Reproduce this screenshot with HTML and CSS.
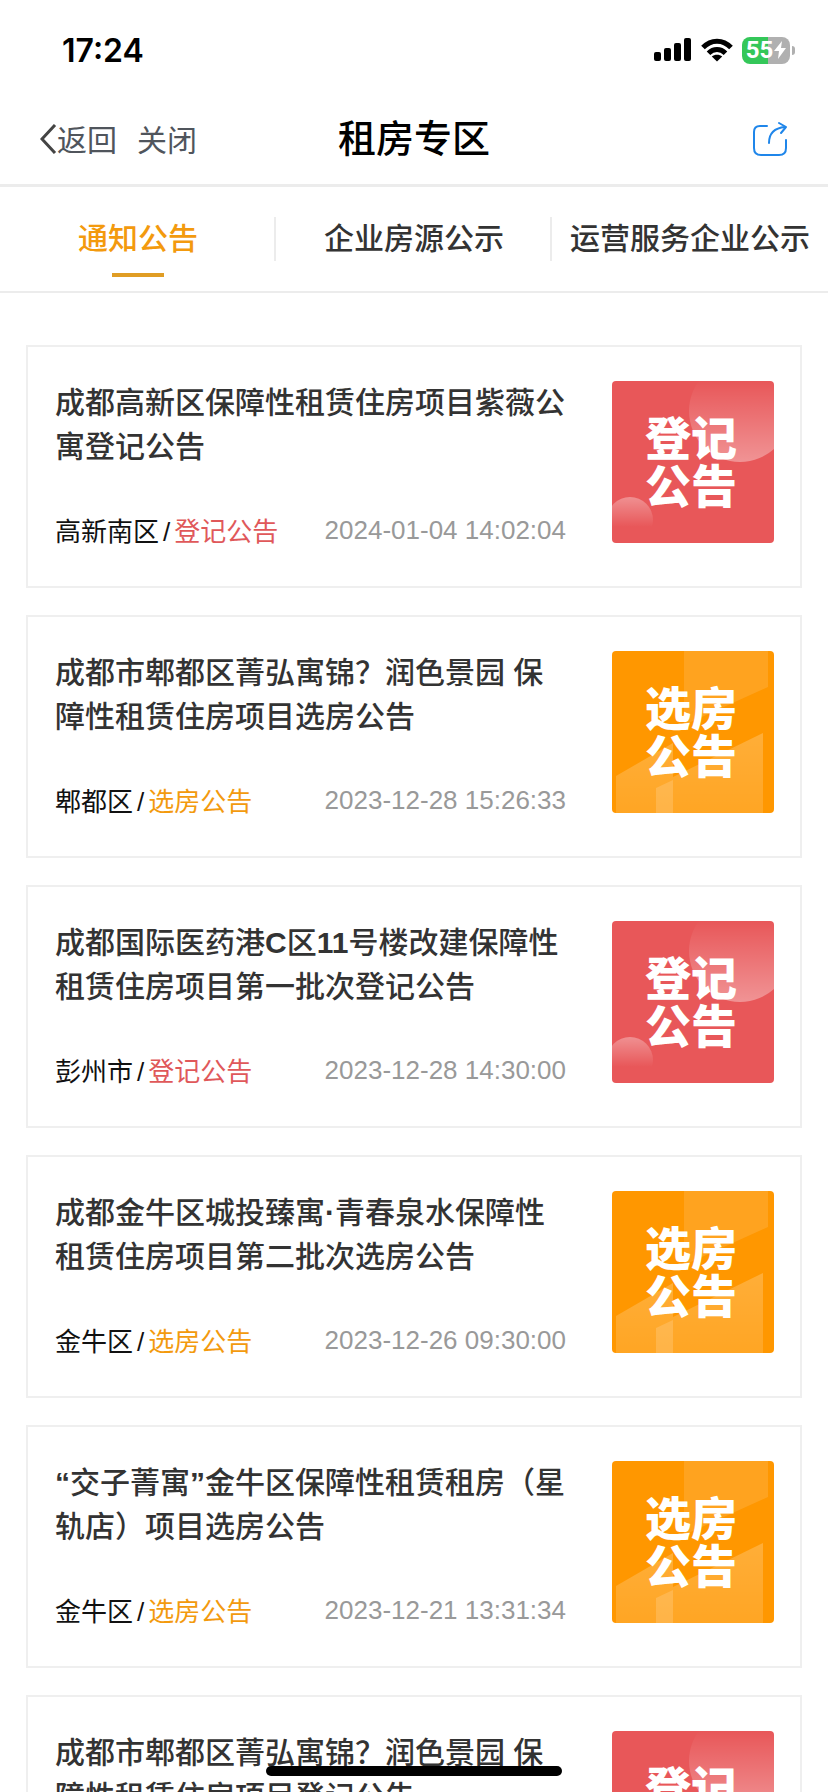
FILE: index.html
```html
<!DOCTYPE html>
<html lang="zh-CN">
<head>
  <meta charset="UTF-8">
  <meta name="viewport" content="width=device-width, initial-scale=1.0">
  <title>租房专区</title>
  <link rel="stylesheet" href="styles.css">
</head>
<body>
  <!-- shared badge artwork -->
  <svg class="defs" width="0" height="0" aria-hidden="true">
    <defs>
      <linearGradient id="fadeDown" x1="0" y1="0" x2="0" y2="1">
        <stop offset="0" stop-color="#fff" stop-opacity="0"/>
        <stop offset="0.2" stop-color="#fff" stop-opacity="0"/>
        <stop offset="1" stop-color="#fff" stop-opacity="0.36"/>
      </linearGradient>
      <linearGradient id="fadeUp" x1="0" y1="0" x2="0" y2="1">
        <stop offset="0" stop-color="#fff" stop-opacity="0.34"/>
        <stop offset="0.65" stop-color="#fff" stop-opacity="0"/>
      </linearGradient>
      <linearGradient id="shade" x1="0" y1="0" x2="0" y2="1">
        <stop offset="0" stop-color="#fff" stop-opacity="0.22"/>
        <stop offset="1" stop-color="#fff" stop-opacity="0.14"/>
      </linearGradient>
    </defs>
    <symbol id="art-register" viewBox="0 0 162 162">
      <rect width="162" height="162" fill="#e85759"/>
      <circle cx="128" cy="30" r="51" fill="url(#fadeDown)"/>
      <circle cx="18" cy="139" r="23" fill="url(#fadeUp)"/>
    </symbol>
    <symbol id="art-select" viewBox="0 0 162 162">
      <rect width="162" height="162" fill="#ff9700"/>
      <path d="M72 0H156V36L72 74Z" fill="#fff" opacity="0.12"/>
      <path d="M4 125L61 92V162H4Z" fill="url(#shade)"/>
      <path d="M61 126L151 82V162H61Z" fill="url(#shade)"/>
      <path d="M44 137L61 129V162H44Z" fill="#fff" opacity="0.16"/>
    </symbol>
  </svg>

  <header>
    <div class="status-bar">
      <span class="time">17:24</span>
      <div class="status-icons">
        <svg width="38" height="24" viewBox="0 0 38 24">
          <rect x="0" y="14" width="7" height="9" rx="2"/>
          <rect x="10" y="10" width="7" height="13" rx="2"/>
          <rect x="20" y="5" width="7" height="18" rx="2"/>
          <rect x="30" y="0" width="7" height="23" rx="2"/>
        </svg>
        <svg width="32" height="24" viewBox="0 0 32 24">
          <g fill="none" stroke="#000" stroke-width="5">
            <path d="M2 9.5C10 1 22 1 30 9.5"/>
            <path d="M7.5 15.2C12.5 10.2 19.500 10.2 24.500 15.2"/>
          </g>
          <path d="M16 23.500L10.800 18.500C13.500 16.200 18.500 16.200 21.200 18.500Z"/>
        </svg>
        <div class="battery">
          <span>55</span>
          <svg width="12" height="18" viewBox="0 0 12 18"><path d="M8 0L0 10H5L4 18L12 7H7Z" fill="#fff"/></svg>
        </div>
      </div>
    </div>
    <div class="nav">
      <div class="nav-left">
        <button type="button" class="nav-btn">
          <svg width="17" height="30" viewBox="0 0 17 30"><path d="M15 1L2 15L15 29" fill="none" stroke="#444" stroke-width="3"/></svg>
          <span>返回</span>
        </button>
        <button type="button" class="nav-btn"><span>关闭</span></button>
      </div>
      <h1>租房专区</h1>
      <button type="button" class="share" aria-label="分享">
        <svg width="36" height="36" viewBox="0 0 36 36" fill="none" stroke="#1f86ea" stroke-width="2" stroke-linecap="round" stroke-linejoin="round">
          <path d="M15 5H8Q2 5 2 11V27Q2 34 9 34H27Q34 34 34 27V19"/>
          <path d="M17 22C17 13 22 7 33 6"/>
          <path d="M27 2L34 6L29 12"/>
        </svg>
      </button>
    </div>
  </header>

  <nav class="tabs">
    <a href="#" class="active">通知公告</a>
    <a href="#">企业房源公示</a>
    <a href="#">运营服务企业公示</a>
  </nav>

  <main class="list">
    <article class="card register">
      <div class="card-body">
        <h2>成都高新区保障性租赁住房项目紫薇公寓登记公告</h2>
        <div class="meta"><span>高新南区<i>/</i><em>登记公告</em></span><time>2024-01-04 14:02:04</time></div>
      </div>
      <div class="badge"><svg><use href="#art-register"/></svg><p>登记<br>公告</p></div>
    </article>

    <article class="card select">
      <div class="card-body">
        <h2>成都市郫都区菁弘寓锦？润色景园 保障性租赁住房项目选房公告</h2>
        <div class="meta"><span>郫都区<i>/</i><em>选房公告</em></span><time>2023-12-28 15:26:33</time></div>
      </div>
      <div class="badge"><svg><use href="#art-select"/></svg><p>选房<br>公告</p></div>
    </article>

    <article class="card register">
      <div class="card-body">
        <h2>成都国际医药港<b>C</b>区<b>11</b>号楼改建保障性租赁住房项目第一批次登记公告</h2>
        <div class="meta"><span>彭州市<i>/</i><em>登记公告</em></span><time>2023-12-28 14:30:00</time></div>
      </div>
      <div class="badge"><svg><use href="#art-register"/></svg><p>登记<br>公告</p></div>
    </article>

    <article class="card select">
      <div class="card-body">
        <h2>成都金牛区城投臻寓<b>·</b>青春泉水保障性租赁住房项目第二批次选房公告</h2>
        <div class="meta"><span>金牛区<i>/</i><em>选房公告</em></span><time>2023-12-26 09:30:00</time></div>
      </div>
      <div class="badge"><svg><use href="#art-select"/></svg><p>选房<br>公告</p></div>
    </article>

    <article class="card select">
      <div class="card-body">
        <h2><b>“</b>交子菁寓<b>”</b>金牛区保障性租赁租房（星轨店）项目选房公告</h2>
        <div class="meta"><span>金牛区<i>/</i><em>选房公告</em></span><time>2023-12-21 13:31:34</time></div>
      </div>
      <div class="badge"><svg><use href="#art-select"/></svg><p>选房<br>公告</p></div>
    </article>

    <article class="card register">
      <div class="card-body">
        <h2>成都市郫都区菁弘寓锦？润色景园 保障性租赁住房项目登记公告</h2>
      </div>
      <div class="badge"><svg><use href="#art-register"/></svg><p>登记<br>公告</p></div>
    </article>
  </main>

  <div class="home-indicator"></div>
</body>
</html>
```
FILE: styles.css
```css
* {
  box-sizing: border-box;
}
body {
  display: flex;
  flex-direction: column;
  height: 100vh;
  margin: 0;
  overflow: hidden;
  background: #fff;
  color: #333;
  font-family: "Liberation Sans", "Noto Sans CJK SC", sans-serif;
}
h1, h2, p {
  margin: 0;
}
button {
  padding: 0;
  border: none;
  background: none;
  font: inherit;
  cursor: pointer;
}
svg {
  display: block;
}
.defs {
  position: absolute;
}

/* status bar */
.status-bar {
  display: flex;
  align-items: center;
  justify-content: space-between;
  height: 92px;
  padding: 8px 33px 0 62px;
  color: #000;
}
.time {
  font-family: Inter, sans-serif;
  font-size: 32px;
  font-weight: 600;
}
.status-icons {
  display: flex;
  align-items: center;
  gap: 9px;
}
.battery {
  position: relative;
  display: flex;
  align-items: center;
  justify-content: center;
  gap: 1px;
  width: 48px;
  height: 27px;
  margin-right: 5px;
  border-radius: 8px;
  background: linear-gradient(90deg, #34c759 55%, #b0b0b0 55%);
  color: #fff;
  font-family: Roboto, sans-serif;
  font-size: 24px;
  font-weight: 700;
  line-height: 27px;
}
.battery::after {
  content: "";
  position: absolute;
  right: -5px;
  top: 9px;
  width: 3px;
  height: 9px;
  border-radius: 0 4px 4px 0;
  background: #b0b0b0;
}

/* nav bar */
.nav {
  display: grid;
  grid-template-columns: 1fr auto 1fr;
  align-items: center;
  height: 95px;
  padding: 2px 40px 0 40px;
  border-bottom: 3px solid #ececec;
}
.nav-left {
  display: flex;
  gap: 20px;
}
.nav-btn {
  display: flex;
  align-items: center;
  color: #50555c;
  font-size: 30px;
  line-height: 40px;
}
.nav-btn span {
  padding-top: 4px;
}
.nav h1 {
  color: #000;
  font-size: 38px;
  font-weight: 500;
  line-height: 56px;
}
.share {
  justify-self: end;
}

/* tabs */
.tabs {
  display: grid;
  grid-template-columns: repeat(3, 1fr);
  height: 106px;
  border-bottom: 2px solid #ececec;
}
.tabs a {
  position: relative;
  display: flex;
  align-items: center;
  justify-content: center;
  padding-bottom: 6px;
  color: #333;
  font-size: 30px;
  font-weight: 500;
  text-decoration: none;
  white-space: nowrap;
}
.tabs a + a::before {
  content: "";
  position: absolute;
  left: -2px;
  top: 30px;
  width: 2px;
  height: 44px;
  background: #ececec;
}
.tabs .active {
  color: #f39a0e;
}
.tabs .active::after {
  content: "";
  position: absolute;
  bottom: 14px;
  width: 52px;
  height: 4px;
  background: #e09d24;
}

/* announcement list */
.list {
  flex: 1;
  min-height: 0;
  display: flex;
  flex-direction: column;
  gap: 27px;
  padding: 52px 26px;
  overflow-y: auto;
  scrollbar-width: none;
}
.card {
  flex: none;
  display: flex;
  align-items: flex-start;
  gap: 46px;
  padding: 34px 26px 41px 27px;
  border: 2px solid #efefef;
}
.card-body {
  flex: 1;
}
.card h2 {
  font-size: 30px;
  font-weight: 500;
  line-height: 44px;
}
.meta {
  display: flex;
  align-items: flex-start;
  justify-content: space-between;
  margin-top: 48px;
  color: #111;
  font-size: 26px;
  line-height: 26px;
}
.meta span {
  padding-top: 2px;
}
.meta i {
  margin: 0 4px;
  font-style: normal;
}
.meta em {
  font-style: normal;
}
.meta time {
  color: #999;
}
.register em {
  color: #e0585a;
}
.select em {
  color: #f39a0e;
}
.badge {
  position: relative;
  display: flex;
  align-items: center;
  justify-content: center;
  width: 162px;
  height: 162px;
  padding: 2px 4px 0 0;
  border-radius: 4px;
  overflow: hidden;
}
.badge svg {
  position: absolute;
  inset: 0;
  width: 100%;
  height: 100%;
}
.badge p {
  position: relative;
  color: #fff;
  font-size: 46px;
  font-weight: 900;
  line-height: 48px;
}

.home-indicator {
  position: fixed;
  left: 50%;
  bottom: 16px;
  width: 296px;
  height: 10px;
  border-radius: 5px;
  background: #000;
  transform: translateX(-50%);
}
```
